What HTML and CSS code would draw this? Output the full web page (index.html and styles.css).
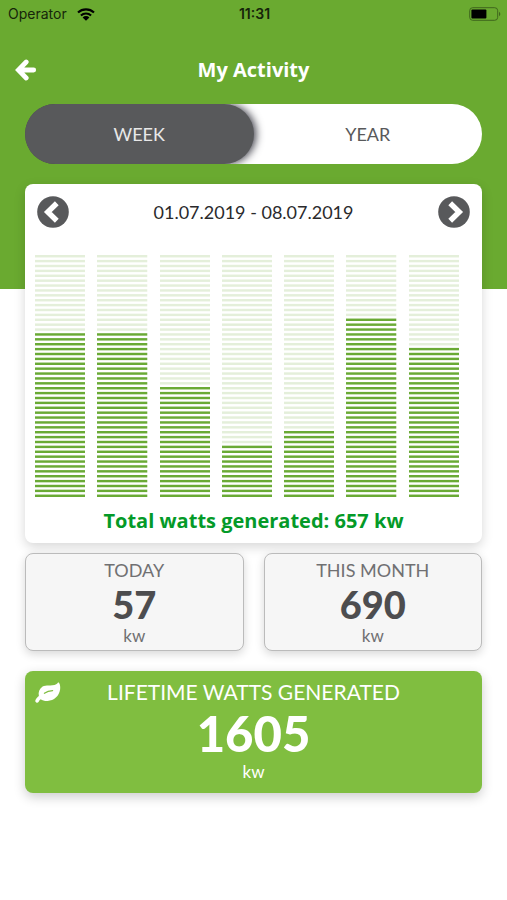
FILE: index.html
```html
<!DOCTYPE html>
<html lang="en">
<head>
<meta charset="utf-8">
<meta name="viewport" content="width=device-width, initial-scale=1">
<title>My Activity</title>
<link rel="stylesheet" href="styles.css">
</head>
<body>
<div class="status">
  <div class="status-left">
    <span>Operator</span>
    <svg class="wifi" viewBox="0 0 18 13" aria-hidden="true">
      <path d="M1 4.6a11.6 11.6 0 0 1 16 0M3.9 7.5a7.4 7.4 0 0 1 10.2 0" fill="none" stroke="currentColor" stroke-width="2.1"/>
      <path d="M9 12.8 5.6 9.4a4.9 4.9 0 0 1 6.8 0z" fill="currentColor"/>
    </svg>
  </div>
  <span class="clock">11:31</span>
  <div class="status-right">
    <svg class="battery" viewBox="0 0 32 14" aria-hidden="true">
      <rect x=".7" y=".7" width="28" height="12.6" rx="3" fill="none" stroke="#3f661d" stroke-width="1"/>
      <rect x="2.4" y="2.4" width="15" height="9.2" rx="1" fill="#000"/>
      <path d="M30 4.8c1.8.7 1.8 3.7 0 4.4z" fill="#3f661d"/>
    </svg>
  </div>
</div>

<header class="nav">
  <button class="back" type="button" aria-label="Back">
    <svg viewBox="0 0 22 22" aria-hidden="true">
      <path d="M11.2 3 3.400 11l7.800 8M4.500 11h14.200" fill="none" stroke="currentColor" stroke-width="4.800" stroke-linejoin="miter" stroke-linecap="round"/>
    </svg>
  </button>
  <h1>My Activity</h1>
</header>

<main>
  <div class="toggle">
    <button class="tab active" type="button" aria-pressed="true">WEEK</button>
    <button class="tab" type="button" aria-pressed="false">YEAR</button>
  </div>

  <section class="card">
    <div class="range">
      <button class="round" type="button" aria-label="Previous week">
        <svg viewBox="0 0 32 32" aria-hidden="true">
          <circle cx="16" cy="16" r="15.8" fill="#58595b"/>
          <path d="M19.8 7.2 10.8 16l9 8.800" fill="none" stroke="#fff" stroke-width="5.4"/>
        </svg>
      </button>
      <span>01.07.2019 - 08.07.2019</span>
      <button class="round" type="button" aria-label="Next week">
        <svg viewBox="0 0 32 32" aria-hidden="true">
          <circle cx="16" cy="16" r="15.8" fill="#58595b"/>
          <path d="M12.2 7.2 21.2 16l-9 8.800" fill="none" stroke="#fff" stroke-width="5.4"/>
        </svg>
      </button>
    </div>
    <div class="chart" id="chart"></div>
    <p class="total">Total watts generated: 657 kw</p>
  </section>

  <div class="stats">
    <section class="stat">
      <h2>TODAY</h2>
      <strong>57</strong>
      <span>kw</span>
    </section>
    <section class="stat">
      <h2>THIS MONTH</h2>
      <strong>690</strong>
      <span>kw</span>
    </section>
  </div>

  <section class="lifetime">
    <svg class="leaf" viewBox="0 0 26 21" aria-hidden="true">
      <path d="M24 .8c1.200 1.800 1.400 4.400 1.100 6.800-.9 6.500-6.200 11.200-12.500 11.400-2.800.1-5.200-.5-6.900-1.800-.9.700-1.500 1.400-2 2.500-.5.900-1.500 1.200-2.400.8-.9-.5-1.300-1.500-.8-2.500.8-1.600 2.100-2.900 3.400-3.900C3 10.400 4.300 6.800 7.600 4.600 10.900 2.500 15.500 4 19.500 3c1.800-.4 2.700-1.300 3.300-2.200.3-.5.900-.5 1.200 0z" fill="#fff"/>
      <path d="M9.400 11.200c2.400-1.700 4.900-2.500 8.200-2.600" fill="none" stroke="#80be40" stroke-width="1.300" stroke-linecap="round"/>
    </svg>
    <h2>LIFETIME WATTS GENERATED</h2>
    <strong>1605</strong>
    <span>kw</span>
  </section>
</main>
<script src="chart.js"></script>
</body>
</html>
```
FILE: styles.css
```css
* {
  box-sizing: border-box;
}

body {
  margin: 0;
  min-height: 100vh;
  background: #fff linear-gradient(#6aaa30, #6aaa30) no-repeat top / 100% 289px;
  color: #58595b;
  font-family: Lato, "Open Sans", sans-serif;
}

button {
  border: 0;
  padding: 0;
  background: none;
  color: inherit;
  font: inherit;
  cursor: pointer;
}

h1, h2, p {
  margin: 0;
  font-weight: 400;
}

svg {
  display: block;
}

.status {
  display: grid;
  grid-template-columns: 1fr auto 1fr;
  align-items: center;
  height: 28px;
  padding: 0 6px 0 8px;
  color: #16250a;
  font: 14px/28px Inter, sans-serif;
}

.status-left {
  display: flex;
  align-items: center;
  gap: 10px;
}

.status-right {
  display: flex;
  justify-content: flex-end;
}

.wifi {
  width: 18px;
  height: 13px;
  color: #000;
}

.battery {
  width: 32px;
  height: 14px;
}

.clock {
  font-weight: 600;
}

.nav {
  display: grid;
  grid-template-columns: 22px 1fr 22px;
  align-items: center;
  height: 76px;
  padding: 8px 15px 0;
  color: #fff;
}

.back svg {
  width: 22px;
  height: 22px;
}

.nav h1,
.total {
  text-align: center;
  font-family: "Open Sans", sans-serif;
  font-size: 20px;
  line-height: 28px;
  font-weight: 700;
}

main {
  padding: 0 25px 24px;
}

.toggle {
  display: flex;
  height: 60px;
  margin-bottom: 20px;
  border-radius: 30px;
  background: linear-gradient(90deg, #58595b 30px, #fff 30px);
  overflow: hidden;
}

.tab {
  flex: 1;
  border-radius: 30px;
  font-size: 18px;
}

.tab.active {
  background: #58595b;
  color: #e8e8e8;
  box-shadow: 2px 0 8px #3c3c46;
}

.card {
  padding: 12px 12px 8px;
  border-radius: 8px;
  background: #fff;
  box-shadow: 0 4px 12px rgba(0, 0, 0, 0.16);
}

.range {
  display: flex;
  align-items: center;
  justify-content: space-between;
  color: #2a2a2c;
  font-size: 18px;
}

.round svg {
  width: 32px;
  height: 32px;
}

.chart {
  display: flex;
  gap: 12px;
  height: 242px;
  margin: 27px 11px 10px -2px;
}

.bar {
  flex: 1;
  min-width: 0;
  height: 242px;
  fill: #e4efda;
}

.bar .lit {
  fill: #6aaa35;
}

.total {
  color: #049a28;
}

.stats {
  display: flex;
  gap: 20px;
  margin: 10px 0 20px;
}

.stat {
  flex: 1;
  display: flex;
  flex-direction: column;
  align-items: center;
  padding: 4px 0;
  border: 1px solid #bbb;
  border-radius: 8px;
  background: #f6f6f6;
  box-shadow: 0 3px 10px rgba(0, 0, 0, 0.16);
  color: #707072;
}

.stat h2 {
  font-size: 18px;
  line-height: 24px;
}

.stat strong {
  color: #4d4d4f;
  font-size: 38px;
  line-height: 44px;
  font-weight: 900;
}

.stat span,
.lifetime span {
  font-size: 17px;
  line-height: 20px;
}

.lifetime {
  position: relative;
  display: flex;
  flex-direction: column;
  align-items: center;
  padding: 8px 0 11px;
  border-radius: 8px;
  background: #80be40;
  box-shadow: 0 4px 12px rgba(0, 0, 0, 0.2);
  color: #fff;
}

.leaf {
  position: absolute;
  top: 11px;
  left: 10px;
  width: 26px;
  height: 21px;
}

.lifetime h2 {
  font-size: 21px;
  line-height: 26px;
}

.lifetime strong {
  font-size: 49px;
  line-height: 57px;
  font-weight: 900;
}
```
FILE: chart.js
```js
// Each bar is a column of evenly spaced lines; the lowest ones are lit.
const LINES = 50;
const days = [34, 34, 23, 11, 14, 37, 31];
const ns = "http://www.w3.org/2000/svg";
const chart = document.getElementById("chart");

for (const lit of days) {
  const svg = document.createElementNS(ns, "svg");
  svg.setAttribute("class", "bar");
  svg.setAttribute("viewBox", `0 0 50 ${LINES * 2 - 1}`);
  svg.setAttribute("preserveAspectRatio", "none");
  for (let i = 0; i < LINES; i++) {
    const line = document.createElementNS(ns, "rect");
    line.setAttribute("width", 50);
    line.setAttribute("height", 1);
    line.setAttribute("y", i * 2);
    if (i >= LINES - lit) line.setAttribute("class", "lit");
    svg.append(line);
  }
  chart.append(svg);
}
```
